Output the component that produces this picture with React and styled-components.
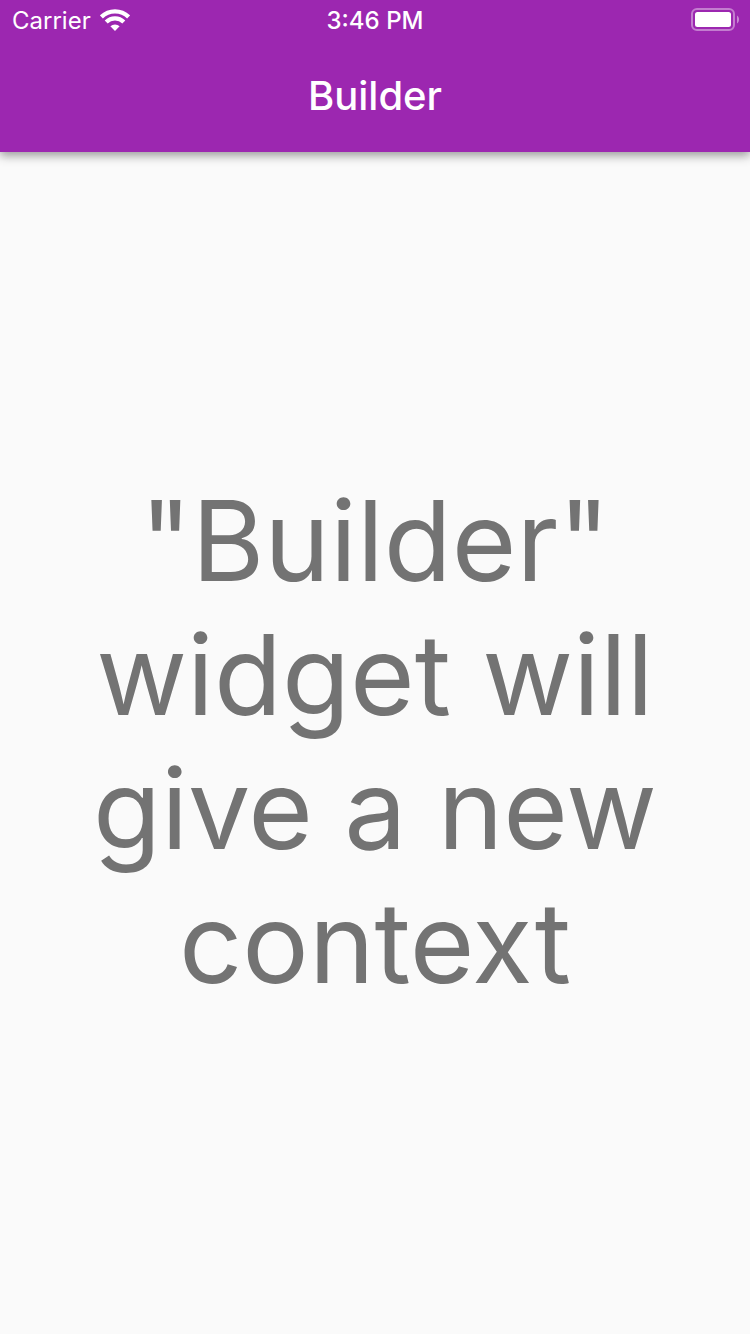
import React from 'react';
import styled, { createGlobalStyle } from 'styled-components';

const GlobalStyle = createGlobalStyle`
  * { box-sizing: border-box; }
  body { margin: 0; background: #fafafa; font-family: Inter, "Liberation Sans", sans-serif; }
`;

const Screen = styled.div`
  min-height: 100vh;
  display: flex;
  flex-direction: column;
`;

const TopBar = styled.header`
  background: #9c27b0;
  color: #fff;
  box-shadow: 0 4px 10px rgba(0, 0, 0, 0.3), 0 2px 8px rgba(0, 0, 0, 0.12);
`;

const StatusBar = styled.div`
  display: grid;
  grid-template-columns: 1fr auto 1fr;
  align-items: center;
  height: 40px;
  padding: 0 12px;
  font-size: 24px;
  line-height: 30px;
`;

const Carrier = styled.div`
  display: flex;
  align-items: center;
  gap: 9px;
`;

const StatusText = styled.span`
  padding-top: 2px;
  font-weight: ${({ $strong }) => ($strong ? 500 : 400)};
`;

const BatterySlot = styled.div`
  display: flex;
  justify-content: flex-end;
`;

const Title = styled.h1`
  margin: 0;
  font-size: 40px;
  line-height: 112px;
  font-weight: 500;
  text-align: center;
`;

const Body = styled.main`
  flex: 1;
  display: flex;
  align-items: center;
  justify-content: center;
  padding: 0 64px 2px;
`;

const Message = styled.p`
  margin: 0;
  color: #737373;
  font-size: 111px;
  line-height: 134px;
  text-align: center;
`;

const WifiIcon = () => (
  <svg width="30" height="22" viewBox="0 0 30 22" fill="none" stroke="#fff" strokeWidth="4.2" aria-label="Wi-Fi">
    <path d="M1.400 7.900a19.300 19.300 0 0 1 27.200 0" />
    <path d="M6.200 12.900a12.500 12.500 0 0 1 17.600 0" />
    <path d="M15 22l-4.600-4.700a6.500 6.500 0 0 1 9.200 0z" fill="#fff" stroke="none" />
  </svg>
);

const BatteryIcon = () => (
  <svg width="47" height="24" viewBox="0 0 47 24" overflow="visible" aria-label="Battery full">
    <rect x="1" y="1" width="42" height="21" rx="5" fill="none" stroke="#fff" strokeOpacity="0.4" strokeWidth="2" />
    <rect x="4" y="4" width="36" height="15" rx="2.500" fill="#fff" />
    <path d="M46 7.500c2.700 1.500 2.700 6.500 0 8z" fill="#fff" fillOpacity="0.45" />
  </svg>
);

export default function App() {
  return (
    <Screen>
      <GlobalStyle />
      <TopBar>
        <StatusBar>
          <Carrier>
            <StatusText>Carrier</StatusText>
            <WifiIcon />
          </Carrier>
          <StatusText as="time" $strong>3:46 PM</StatusText>
          <BatterySlot><BatteryIcon /></BatterySlot>
        </StatusBar>
        <Title>Builder</Title>
      </TopBar>
      <Body>
        <Message>"Builder" widget will give a new context</Message>
      </Body>
    </Screen>
  );
}
